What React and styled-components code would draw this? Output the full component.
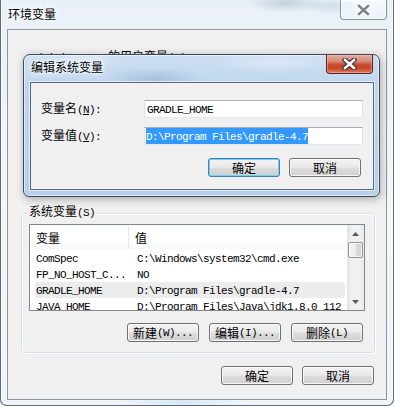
import React from "react";
import styled, { createGlobalStyle } from "styled-components";

const GlobalStyle = createGlobalStyle`
  html, body { margin: 0; padding: 0; width: 394px; height: 406px; overflow: hidden; background: #e6eef6; }
  * { box-sizing: border-box; }
`;

const CJK = `"Noto Sans CJK SC", "Noto Sans", sans-serif`;

const Ascii = styled.span`
  font-family: "Liberation Mono", "DejaVu Sans Mono", monospace;
  font-size: 11px;
  letter-spacing: -0.6px;
`;

function T({ children }) {
  const parts = String(children).split(/([\x20-\x7e]+)/);
  return parts.map((p, i) =>
    p === "" ? null : /^[\x20-\x7e]+$/.test(p) ? (
      <Ascii key={i}>{p}</Ascii>
    ) : (
      <React.Fragment key={i}>{p}</React.Fragment>
    )
  );
}

const Frame = styled.div`
  width: 394px;
  height: 406px;
  border: 1px solid #5f6a75;
  border-top: none;
  border-radius: 0 0 7px 7px;
  padding: 0 6px 5px 6px;
  display: flex;
  flex-direction: column;
  font-family: ${CJK};
  font-size: 12px;
  color: #000;
  background:
    radial-gradient(ellipse 40px 10px at 285px 3px, rgba(120, 150, 180, 0.35), transparent),
    radial-gradient(ellipse 30px 8px at 330px 6px, rgba(150, 175, 200, 0.3), transparent),
    radial-gradient(ellipse 60px 20px at 180px 400px, rgba(200, 225, 240, 0.6), transparent),
    linear-gradient(to bottom, #e9f1f8 0%, #f2f7fb 50%, #eef4f9 100%);
  box-shadow: inset 1px 0 0 rgba(255, 255, 255, 0.7), inset -1px 0 0 rgba(255, 255, 255, 0.7);
`;

const TitleBar = styled.div`
  height: 29px;
  flex: none;
  display: flex;
  align-items: flex-start;
  padding-left: 1px;
`;

const TitleText = styled.div`
  margin-top: 7px;
  line-height: 14px;
  font-size: 12px;
  text-shadow: 0 0 6px #fff, 0 0 10px #fff, 0 0 3px #fff;
`;

const CloseBtn = styled.div`
  margin-left: auto;
  width: 47px;
  height: ${(p) => (p.$active ? 19 : 20)}px;
  border: 1px solid ${(p) => (p.$active ? "#5a2219" : "#8d939a")};
  border-top: none;
  border-radius: 0 0 4px 4px;
  display: flex;
  align-items: center;
  justify-content: center;
  background: ${(p) =>
    p.$active
      ? "linear-gradient(to bottom, #e7aa9c 0%, #d68a78 35%, #c6472f 55%, #c9492e 75%, #e17e5e 100%)"
      : "linear-gradient(to bottom, rgba(255,255,255,0.55), rgba(235,242,248,0.35))"};
  box-shadow: ${(p) =>
    p.$active
      ? "inset 0 0 0 1px rgba(255,200,190,0.45)"
      : "inset 0 0 0 1px rgba(255,255,255,0.7)"};
`;

function XGlyph({ active }) {
  const outer = active ? "#3a3a3a" : "#ffffff";
  const inner = active ? "#ffffff" : "#7d838a";
  return (
    <svg width="15" height="12" viewBox="0 0 15 12">
      <path d="M3 2 L12 10 M12 2 L3 10" stroke={outer} strokeWidth="5" strokeLinecap="square" />
      <path d="M3 2 L12 10 M12 2 L3 10" stroke={inner} strokeWidth="2.6" strokeLinecap="square" />
    </svg>
  );
}

const Client = styled.div`
  flex: 1;
  position: relative;
  border: 1px solid #8e959c;
  background: #f0f0f0;
  display: flex;
  flex-direction: column;
  padding: 0 11px 0 13px;
`;

const UserSection = styled.div`
  height: 183px;
  flex: none;
  padding: 18px 0 0 9px;
`;

const ClippedLabel = styled.div`
  line-height: 14px;
  height: 6px;
  overflow: hidden;
  white-space: nowrap;
  padding-top: 1px;
`;

const Group = styled.div`
  position: relative;
  border: 1px solid #d5dfe5;
  border-radius: 3px;
  padding: 10px 9px 10px 7px;
  box-shadow: inset 1px 1px 0 #fff, 1px 1px 0 #fff;
`;

const Legend = styled.div`
  position: absolute;
  top: -10px;
  left: 5px;
  padding: 0 2px;
  line-height: 14px;
  background: #f0f0f0;
  white-space: nowrap;
`;

const List = styled.div`
  height: 87px;
  border: 1px solid #828790;
  background: #fff;
  display: flex;
  overflow: hidden;
`;

const ListBody = styled.div`
  flex: 1;
  display: flex;
  flex-direction: column;
  min-width: 0;
  overflow: hidden;
`;

const Header = styled.div`
  height: 24px;
  flex: none;
  display: flex;
  background: linear-gradient(to bottom, #fff 0%, #fff 60%, #f7f8f9 100%);
`;

const HeadCell = styled.div`
  width: ${(p) => (p.$w ? `${p.$w}px` : "auto")};
  flex: ${(p) => (p.$w ? "none" : 1)};
  padding-left: 6px;
  display: flex;
  align-items: center;
  border-right: ${(p) => (p.$w ? "1px solid #e5e5e5" : "none")};
`;

const Rows = styled.div`
  padding-top: 1px;
`;

const Row = styled.div`
  height: 16px;
  margin: 0 2px 0 5px;
  display: flex;
  align-items: center;
  border-radius: 2px;
  background: ${(p) => (p.$sel ? "#ececec" : "transparent")};
  white-space: nowrap;
`;

const Cell = styled.div`
  width: ${(p) => (p.$w ? `${p.$w}px` : "auto")};
  flex: ${(p) => (p.$w ? "none" : 1)};
  padding-left: 1px;
  line-height: 16px;
  overflow: hidden;
`;

const ScrollBar = styled.div`
  width: 17px;
  flex: none;
  display: flex;
  flex-direction: column;
  background: linear-gradient(to right, #e2e2e2 0%, #f0f0f0 25%, #f1f1f1 75%, #e9e9e9 100%);
`;

const Arrow = styled.div`
  height: 17px;
  flex: none;
  display: flex;
  align-items: center;
  justify-content: center;
`;

const Thumb = styled.div`
  height: 16px;
  margin: 0 1px;
  flex: none;
  border: 1px solid #959595;
  border-radius: 2px;
  background: linear-gradient(to right, #f4f4f4 0%, #ececec 50%, #dcdcdc 51%, #d3d3d3 100%);
  box-shadow: inset 0 0 0 1px rgba(255, 255, 255, 0.7);
`;

const Track = styled.div`
  flex: 1;
`;

const ButtonRow = styled.div`
  display: flex;
  justify-content: flex-end;
  gap: ${(p) => p.$gap}px;
  margin-top: ${(p) => p.$mt}px;
  padding-right: ${(p) => p.$pr}px;
`;

const Button = styled.div`
  width: ${(p) => p.$w || 72}px;
  height: 19px;
  border: 1px solid ${(p) => (p.$default ? "#3c7fb1" : "#707070")};
  border-radius: 3px;
  display: flex;
  align-items: center;
  justify-content: center;
  line-height: 14px;
  white-space: nowrap;
  background: linear-gradient(to bottom, #f2f2f2 0%, #ebebeb 48%, #dddddd 52%, #cfcfcf 100%);
  box-shadow: inset 0 0 0 1px ${(p) => (p.$default ? "#6fd0f7" : "rgba(255,255,255,0.8)")};
`;

const Dialog = styled.div`
  position: absolute;
  left: 15px;
  top: 24px;
  width: 357px;
  height: 143px;
  border: 1px solid #3c4855;
  border-radius: 7px 7px 6px 6px;
  display: flex;
  flex-direction: column;
  background:
    radial-gradient(ellipse 50px 12px at 130px 24px, rgba(120, 150, 185, 0.35), transparent),
    radial-gradient(ellipse 60px 10px at 250px 8px, rgba(225, 238, 250, 0.7), transparent),
    radial-gradient(ellipse 40px 10px at 60px 6px, rgba(230, 240, 250, 0.6), transparent),
    linear-gradient(to bottom, #cddff2 0%, #bdd5ed 25%, #b6d0eb 100%);
  box-shadow: inset 0 0 0 1px rgba(255, 255, 255, 0.55), 1px 2px 8px rgba(0, 0, 0, 0.3);
`;

const DialogTitle = styled.div`
  height: 27px;
  flex: none;
  display: flex;
  align-items: flex-start;
  padding: 0 6px 0 7px;
`;

const DialogTitleText = styled.div`
  margin-top: 5px;
  line-height: 14px;
  text-shadow: 0 0 6px #fff, 0 0 10px #fff, 0 0 3px #fff;
`;

const DialogClient = styled.div`
  flex: 1;
  margin: 0 5px 6px 6px;
  border: 1px solid #56687d;
  background: #f0f0f0;
  box-shadow: 0 0 0 1px rgba(255, 255, 255, 0.6);
  padding: 17px 10px 0 10px;
  display: flex;
  flex-direction: column;
`;

const Field = styled.div`
  display: flex;
  align-items: center;
  height: 18px;
  margin-top: ${(p) => p.$mt || 0}px;
`;

const FieldLabel = styled.div`
  width: 103px;
  flex: none;
  line-height: 14px;
  white-space: nowrap;
`;

const Input = styled.div`
  flex: 1;
  height: 18px;
  border: 1px solid;
  border-color: #abadb3 #dbdfe6 #e3e9ef #e2e3ea;
  background: #fff;
  padding-left: 1px;
  display: flex;
  align-items: center;
  white-space: nowrap;
`;

const Selected = styled.span`
  background: #3399ff;
  color: #fff;
  line-height: 14px;
`;

const InputText = styled.span`
  line-height: 14px;
  padding-left: 1px;
`;

const rows = [
  ["ComSpec", "C:\\Windows\\system32\\cmd.exe"],
  ["FP_NO_HOST_C...", "NO"],
  ["GRADLE_HOME", "D:\\Program Files\\gradle-4.7", true],
  ["JAVA_HOME", "D:\\Program Files\\Java\\jdk1.8.0_112"],
];

function ArrowIcon({ down }) {
  return (
    <svg width="7" height="4" viewBox="0 0 7 4">
      <polygon points={down ? "0,0 7,0 3.5,4" : "0,4 7,4 3.5,0"} fill="#5a5a5a" />
    </svg>
  );
}

export default function App() {
  return (
    <>
      <GlobalStyle />
      <Frame>
        <TitleBar>
          <TitleText>环境变量</TitleText>
          <CloseBtn>
            <XGlyph />
          </CloseBtn>
        </TitleBar>
        <Client>
          <UserSection>
            <ClippedLabel>
              <T>Administrator的用户变量(U)</T>
            </ClippedLabel>
          </UserSection>

          <Group>
            <Legend>
              <T>系统变量(S)</T>
            </Legend>
            <List>
              <ListBody>
                <Header>
                  <HeadCell $w={99}>变量</HeadCell>
                  <HeadCell>值</HeadCell>
                </Header>
                <Rows>
                  {rows.map(([n, v, sel]) => (
                    <Row key={n} $sel={sel}>
                      <Cell $w={101}>
                        <Ascii>{n}</Ascii>
                      </Cell>
                      <Cell>
                        <Ascii>{v}</Ascii>
                      </Cell>
                    </Row>
                  ))}
                </Rows>
              </ListBody>
              <ScrollBar>
                <Arrow>
                  <ArrowIcon />
                </Arrow>
                <Thumb />
                <Track />
                <Arrow>
                  <ArrowIcon down />
                </Arrow>
              </ScrollBar>
            </List>
            <ButtonRow $gap={10} $mt={12} $pr={2}>
              <Button>
                <T>新建(W)...</T>
              </Button>
              <Button>
                <T>编辑(I)...</T>
              </Button>
              <Button>
                <T>删除(L)</T>
              </Button>
            </ButtonRow>
          </Group>

          <ButtonRow $gap={9} $mt={13} $pr={1}>
            <Button>确定</Button>
            <Button>取消</Button>
          </ButtonRow>

          <Dialog>
            <DialogTitle>
              <DialogTitleText>编辑系统变量</DialogTitleText>
              <CloseBtn $active>
                <XGlyph active />
              </CloseBtn>
            </DialogTitle>
            <DialogClient>
              <Field>
                <FieldLabel>
                  变量名
                  <Ascii>
                    (<u>N</u>):
                  </Ascii>
                </FieldLabel>
                <Input>
                  <InputText>
                    <Ascii>GRADLE_HOME</Ascii>
                  </InputText>
                </Input>
              </Field>
              <Field $mt={9}>
                <FieldLabel>
                  变量值
                  <Ascii>
                    (<u>V</u>):
                  </Ascii>
                </FieldLabel>
                <Input>
                  <Selected>
                    <Ascii>D:\Program Files\gradle-4.7</Ascii>
                  </Selected>
                </Input>
              </Field>
              <ButtonRow $gap={9} $mt={13} $pr={2}>
                <Button $default>确定</Button>
                <Button>取消</Button>
              </ButtonRow>
            </DialogClient>
          </Dialog>
        </Client>
      </Frame>
    </>
  );
}
